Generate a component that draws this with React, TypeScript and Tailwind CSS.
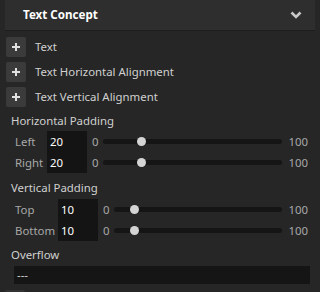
import React from "react";

const Plus = () => (
  <div className="w-[20px] h-[20px] bg-[#3b3b3b] rounded-[2px] flex items-center justify-center">
    <svg width="10" height="10" viewBox="0 0 10 10">
      <path d="M5 1v8M1 5h8" stroke="#e0e0e0" strokeWidth="2" />
    </svg>
  </div>
);

const Slider = ({ pos }: { pos: number }) => (
  <div className="flex-1 relative h-[9px] flex items-center">
    <div className="w-full h-[5px] rounded-full bg-[#151515]" />
    <div
      className="absolute w-[9px] h-[9px] rounded-full bg-[#d4d4d4]"
      style={{ left: pos }}
    />
  </div>
);

const SliderRow = ({ label, value, labelW, pos }: { label: string; value: string; labelW: string; pos: number }) => (
  <div className="flex items-center h-[21px]">
    <div className={`${labelW} text-[#a8a8a8] pl-[4px]`}>{label}</div>
    <div className="w-[40px] h-[21px] bg-[#141414] text-white pl-[3px] flex items-center">{value}</div>
    <div className="flex items-center flex-1 pl-[5px] pr-[12px]">
      <span className="text-[#a8a8a8] w-[11px]">0</span>
      <Slider pos={pos} />
      <span className="text-[#a8a8a8] ml-[6px]">100</span>
    </div>
  </div>
);

export default function App() {
  return (
    <div
      className="w-[320px] h-[292px] bg-[#262626] overflow-hidden text-[11.4px] leading-none"
      style={{ fontFamily: '"Noto Sans", sans-serif' }}
    >
      <div className="mx-[5px] h-[31px] bg-[#2e2e2e] border-b border-[#1d1d1d] flex items-center justify-between pl-[18px] pr-[13px]">
        <span className="text-white font-bold text-[11.6px]">Text Concept</span>
        <svg width="12" height="8" viewBox="0 0 12 8">
          <path d="M1.5 1.5L6 6l4.5-4.5" stroke="#c8c8c8" strokeWidth="2.6" fill="none" />
        </svg>
      </div>
      <div className="flex flex-col gap-[5px] pl-[6px] pt-[6px]">
        {["Text", "Text Horizontal Alignment", "Text Vertical Alignment"].map((t) => (
          <div key={t} className="flex items-center h-[20px]">
            <Plus />
            <span className="ml-[9px] text-[#d0d0d0]">{t}</span>
          </div>
        ))}
      </div>
      <div className="pl-[11px] mt-[5px] text-[#d0d0d0] h-[17px] flex items-center">Horizontal Padding</div>
      <div className="pl-[11px] mt-[2px]">
        <SliderRow label="Left" value="20" labelW="w-[36px]" pos={34} />
        <SliderRow label="Right" value="20" labelW="w-[36px]" pos={34} />
      </div>
      <div className="pl-[11px] mt-[6px] text-[#d0d0d0] h-[17px] flex items-center">Vertical Padding</div>
      <div className="pl-[11px] mt-[3px]">
        <SliderRow label="Top" value="10" labelW="w-[47px]" pos={16} />
        <SliderRow label="Bottom" value="10" labelW="w-[47px]" pos={16} />
      </div>
      <div className="pl-[11px] mt-[5px] text-[#d0d0d0] h-[17px] flex items-center">Overflow</div>
      <div className="ml-[14px] mr-[10px] mt-[3px] h-[18px] bg-[#151515] text-[#d0d0d0] pl-[3px] flex items-center">---</div>
      <div className="ml-[5px] mt-[6px] w-[20px] h-[20px] bg-[#333333] rounded-[2px]" />
    </div>
  );
}
